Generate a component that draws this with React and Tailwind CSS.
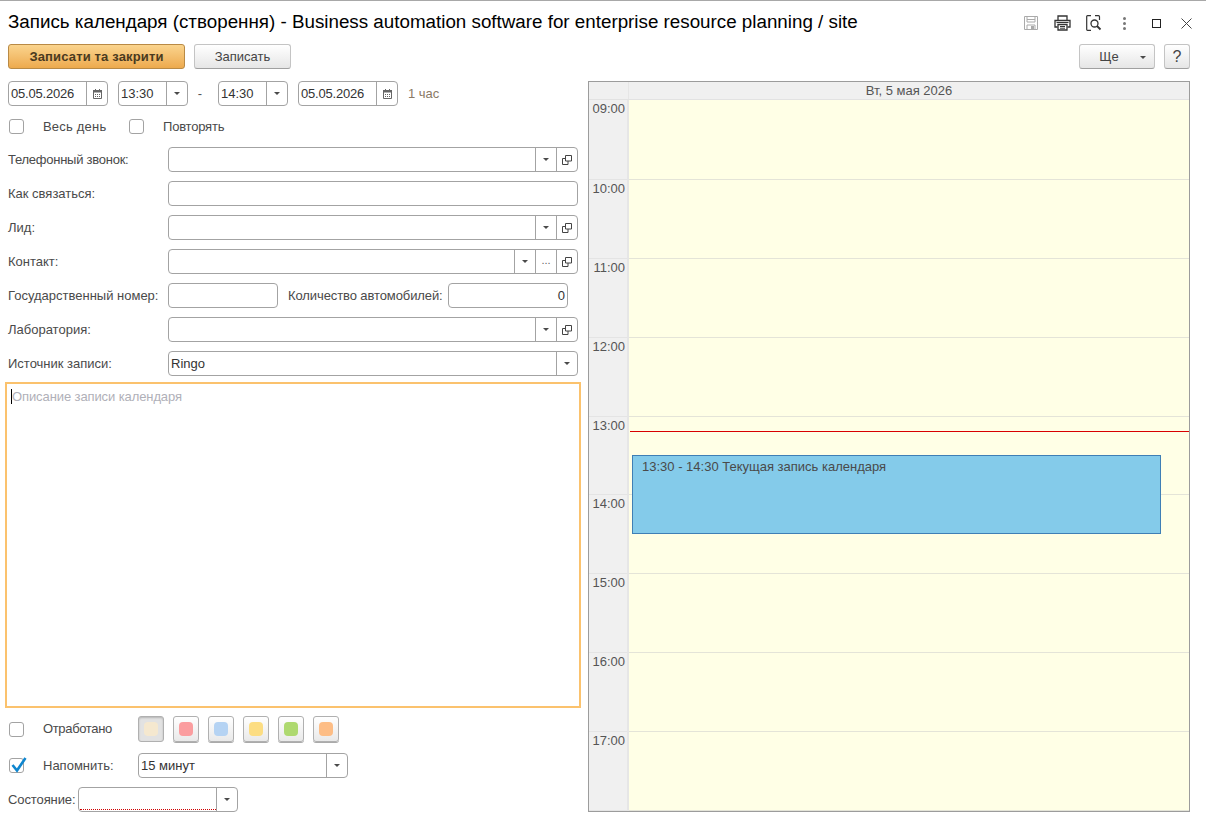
import React from "react";

const CaretIcon = () => (
  <svg width="6" height="3" viewBox="0 0 6 3" className="block">
    <path d="M0 0h6L3 3z" fill="#4a4a4a" />
  </svg>
);

const CalendarIcon = () => (
  <svg width="9" height="10" viewBox="0 0 9 10" className="block">
    <path d="M0.500 1.500h8v8h-8z" fill="none" stroke="#666" />
    <path d="M0 1h9v2.500H0zM2 0h1v2H2zM6 0h1v2H6z" fill="#666" />
    <path d="M2 5h1v1H2zM4 5h1v1H4zM6 5h1v1H6zM2 7h1v1H2zM4 7h1v1H4zM6 7h1v1H6z" fill="#666" />
  </svg>
);

const OpenIcon = () => (
  <svg width="10" height="10" viewBox="0 0 10 10" className="block">
    <path d="M3.500 0.500h6v5.500h-6z" fill="none" stroke="#444" />
    <path d="M3.500 3.500h-3v6h5.500v-3.500" fill="none" stroke="#444" />
  </svg>
);

const Seg = ({ children }) => (
  <div className="w-[21px] h-full border-l border-[#a3a3a3] flex items-center justify-center shrink-0 text-[#555]">
    {children}
  </div>
);

const Field = ({ className = "", value, align, caret, dots, open, calendar, invalid }) => (
  <div className={"h-[25px] bg-white border border-[#a3a3a3] rounded-[4px] flex items-stretch " + className}>
    <div className={"relative flex-1 min-w-0 pl-[2px] pr-[2px] leading-[24px] text-[#333] " + (align === "right" ? "text-right" : "")}>
      {value}
      {invalid && <div className="absolute left-[1px] right-0 bottom-[1px] border-b border-dotted border-[#d00000]" />}
    </div>
    {calendar && <Seg><CalendarIcon /></Seg>}
    {caret && <Seg><CaretIcon /></Seg>}
    {dots && <Seg><span className="text-[11px] leading-none text-[#666] -mt-[2px]">...</span></Seg>}
    {open && <Seg><OpenIcon /></Seg>}
  </div>
);

const Checkbox = ({ checked }) => (
  <div className="relative w-[15px] h-[15px] bg-white border border-[#a3a3a3] rounded-[3px] shrink-0">
    {checked && (
      <svg width="18" height="17" viewBox="0 0 18 17" className="absolute -left-[1px] -top-[3px]">
        <path d="M3.500 9l4.500 5.500L16.500 2" fill="none" stroke="#0f86cf" strokeWidth="2.600" />
      </svg>
    )}
  </div>
);

const FormRow = ({ label, children }) => (
  <div className="flex items-center h-[25px]">
    <div className="w-[160px] shrink-0 text-[#4a4a4a]">{label}</div>
    {children}
  </div>
);

const ColorButton = ({ color, pressed }) => (
  <div
    className={
      "w-[26px] h-[26px] rounded-[3px] border border-[#b0b0b0] flex items-center justify-center " +
      (pressed ? "bg-[#e2e2e2] shadow-[inset_0_1px_2px_rgba(0,0,0,0.2)]" : "bg-gradient-to-b from-white to-[#e9e9e9] shadow-[0_1px_0_#aaa]")
    }
  >
    <div className={"w-[14px] h-[14px] rounded-[4px] " + color} />
  </div>
);

const hours = [
  { time: "09:00", height: "h-[80px]" },
  { time: "10:00", height: "h-[79px]" },
  { time: "11:00", height: "h-[79px]" },
  { time: "12:00", height: "h-[79px]" },
  { time: "13:00", height: "h-[78px]" },
  { time: "14:00", height: "h-[79px]" },
  { time: "15:00", height: "h-[79px]" },
  { time: "16:00", height: "h-[79px]" },
  { time: "17:00", height: "h-[79px]" },
];

const GrayButton = ({ className = "", children }) => (
  <div className={"h-[25px] rounded-[3px] border border-[#c4c4c4] border-b-[#a0a0a0] bg-gradient-to-b from-white to-[#e6e6e6] flex items-center justify-center text-[#444] " + className}>
    {children}
  </div>
);

const DateValue = () => <span className="tracking-[-0.2px]">05.05.2026</span>;

export default function App() {
  return (
    <div className="w-[1206px] h-[816px] bg-white border-t border-[#a8a8a8] overflow-hidden text-[13px] font-['Liberation_Sans',Arial,sans-serif]">
      {/* Title */}
      <div className="h-[43px] flex items-start pl-[8px] pr-[14px]">
        <h1 className="mt-[10px] text-[18.800px] leading-[21px] text-black whitespace-nowrap">
          Запись календаря (створення) - Business automation software for enterprise resource planning / site
        </h1>
        <div className="ml-auto mt-[14px] flex items-center text-[#444]">
          <svg width="16" height="16" viewBox="0 0 16 16">
            <path d="M1.500 1.500h13v13h-13z" fill="none" stroke="#aaa" />
            <path d="M4 2v5h8V2M4 4.500h8M4 14v-4h8v4" fill="none" stroke="#aaa" />
            <path d="M8 11h3v3H8z" fill="#aaa" />
          </svg>
          <svg width="17" height="16" viewBox="0 0 17 16" className="ml-[15px]">
            <path d="M4 5V1h9v4M3.500 12H1V5.500h15V12h-2.500" fill="none" stroke="#333" strokeWidth="1.300" />
            <path d="M4 9.500h9V15H4z" fill="none" stroke="#333" strokeWidth="1.300" />
            <path d="M6 11.500h5M6 13.200h5M2.500 7.500h12" stroke="#333" />
          </svg>
          <svg width="16" height="16" viewBox="0 0 16 16" className="ml-[15px]">
            <path d="M5 0.700H1.500Q0.700 0.700 0.700 1.500V14.500Q0.700 15.300 1.500 15.300H5M9 0.700h3.500q1 0 1 1V5" fill="none" stroke="#333" strokeWidth="1.200" />
            <circle cx="8.500" cy="8.500" r="3.500" fill="none" stroke="#333" strokeWidth="1.300" />
            <path d="M11 11l3.500 3.500" stroke="#333" strokeWidth="1.800" />
          </svg>
          <div className="ml-[21px] flex flex-col gap-[2px]">
            <div className="w-[3px] h-[3px] rounded-full bg-[#777]" />
            <div className="w-[3px] h-[3px] rounded-full bg-[#777]" />
            <div className="w-[3px] h-[3px] rounded-full bg-[#777]" />
          </div>
          <div className="ml-[26px] w-[9px] h-[9px] border border-[#222]" />
          <svg width="11" height="11" viewBox="0 0 11 11" className="ml-[20px]">
            <path d="M0.500 0.500l10 10M10.500 0.500l-10 10" stroke="#444" />
          </svg>
        </div>
      </div>

      {/* Command bar */}
      <div className="h-[25px] flex items-center pl-[8px] pr-[16px]">
        <div className="w-[177px] h-[25px] rounded-[3px] border border-[#b98a45] bg-gradient-to-b from-[#fad48d] to-[#edaa4d] flex items-center justify-center font-bold text-[#4a3a20] tracking-[0.15px]">
          Записати та закрити
        </div>
        <GrayButton className="w-[97px] ml-[9px]">Записать</GrayButton>
        <GrayButton className="w-[76px] ml-auto relative">
          <span className="-ml-[16px]">Ще</span>
          <div className="absolute right-[8px] top-[11px]"><CaretIcon /></div>
        </GrayButton>
        <GrayButton className="w-[26px] ml-[9px] text-[16px] text-[#222]">?</GrayButton>
      </div>

      {/* Body */}
      <div className="flex pl-[8px] pt-[12px]">
        {/* Left form */}
        <div className="w-[570px] shrink-0">
          <div className="flex items-center h-[25px]">
            <Field className="w-[100px]" value={<DateValue />} calendar />
            <Field className="w-[70px] ml-[10px]" value="13:30" caret />
            <div className="w-[30px] text-center pr-[6px] text-[#555]">-</div>
            <Field className="w-[70px]" value="14:30" caret />
            <Field className="w-[100px] ml-[10px]" value={<DateValue />} calendar />
            <div className="ml-[10px] text-[#8a7a66]">1 час</div>
          </div>

          <div className="flex items-center h-[15px] mt-[13px] pl-[1px] text-[#4a4a4a]">
            <Checkbox />
            <span className="ml-[19px] w-[86px] tracking-[0.2px]">Весь день</span>
            <Checkbox />
            <span className="ml-[19px] tracking-[-0.2px]">Повторять</span>
          </div>

          <div className="mt-[13px] flex flex-col gap-[9px]">
            <FormRow label={<span className="tracking-[-0.25px]">Телефонный звонок:</span>}>
              <Field className="flex-1" caret open />
            </FormRow>
            <FormRow label="Как связаться:">
              <Field className="flex-1" />
            </FormRow>
            <FormRow label="Лид:">
              <Field className="flex-1" caret open />
            </FormRow>
            <FormRow label="Контакт:">
              <Field className="flex-1" caret dots open />
            </FormRow>
            <FormRow label="Государственный номер:">
              <Field className="w-[110px]" />
              <div className="ml-[10px] w-[160px] shrink-0 text-[#4a4a4a] tracking-[-0.1px]">Количество автомобилей:</div>
              <Field className="w-[120px]" value="0" align="right" />
            </FormRow>
            <FormRow label="Лаборатория:">
              <Field className="flex-1" caret open />
            </FormRow>
            <FormRow label="Источник записи:">
              <Field className="flex-1" value="Ringo" caret />
            </FormRow>
          </div>

          {/* Description */}
          <div className="mt-[6px] -ml-[3px] w-[576px] h-[326px] border-2 border-[#fbc26d] pl-[4px] pt-[5px]">
            <div className="flex items-center h-[15px] text-[#b0b0b8] tracking-[-0.1px]">
              <div className="w-px h-[15px] bg-black" />
              Описание записи календаря
            </div>
          </div>

          <div className="flex items-center h-[26px] mt-[8px] pl-[1px] text-[#4a4a4a]">
            <Checkbox />
            <span className="ml-[19px] w-[95px] tracking-[-0.35px]">Отработано</span>
            <div className="flex gap-[9px]">
              <ColorButton pressed color="bg-[#f5e8cf]" />
              <ColorButton color="bg-[#fb9d9f]" />
              <ColorButton color="bg-[#b5d3f3]" />
              <ColorButton color="bg-[#fcdd82]" />
              <ColorButton color="bg-[#aed96f]" />
              <ColorButton color="bg-[#fdbd85]" />
            </div>
          </div>

          <div className="flex items-center h-[25px] mt-[11px] pl-[1px] text-[#4a4a4a]">
            <Checkbox checked />
            <span className="ml-[19px] w-[95px]">Напомнить:</span>
            <Field className="w-[210px]" value="15 минут" caret />
          </div>

          <div className="flex items-center h-[25px] mt-[9px] text-[#4a4a4a]">
            <span className="w-[70px] tracking-[-0.1px]">Состояние:</span>
            <Field className="w-[160px]" caret invalid />
          </div>
        </div>

        {/* Calendar */}
        <div className="relative ml-[10px] w-[602px] h-[731px] border border-[#9c9c9c] bg-[#ffffe6] overflow-hidden">
          <div className="h-[18px] flex bg-[#f0f0f0] border-b border-[#e2e2e2]">
            <div className="w-[40px] border-r border-[#e6e6e6]" />
            <div className="flex-1 text-center leading-[17px] text-[#555]">Вт, 5 мая 2026</div>
          </div>
          {hours.map((hour) => (
            <div key={hour.time} className={"flex " + hour.height}>
              <div className="w-[40px] bg-[#f0f0f0] border-r-2 border-b border-r-[#e6e6e6] border-b-[#e4e4e4] text-right pr-[2px] pt-[1px] text-[#555] leading-[16px] shrink-0">
                {hour.time}
              </div>
              <div className="flex-1 border-b border-[#e4e4d8]" />
            </div>
          ))}
          <div className="absolute left-[41px] right-0 top-[349px] border-t border-[#d80000]" />
          <div className="absolute left-[43px] top-[373px] w-[529px] h-[79px] bg-[#84cbea] border border-[#3f7fb5] pl-[9px] pt-[3px] leading-[16px] text-[#4a4a4a]">
            13:30 - 14:30 Текущая запись календаря
          </div>
        </div>
      </div>
    </div>
  );
}
